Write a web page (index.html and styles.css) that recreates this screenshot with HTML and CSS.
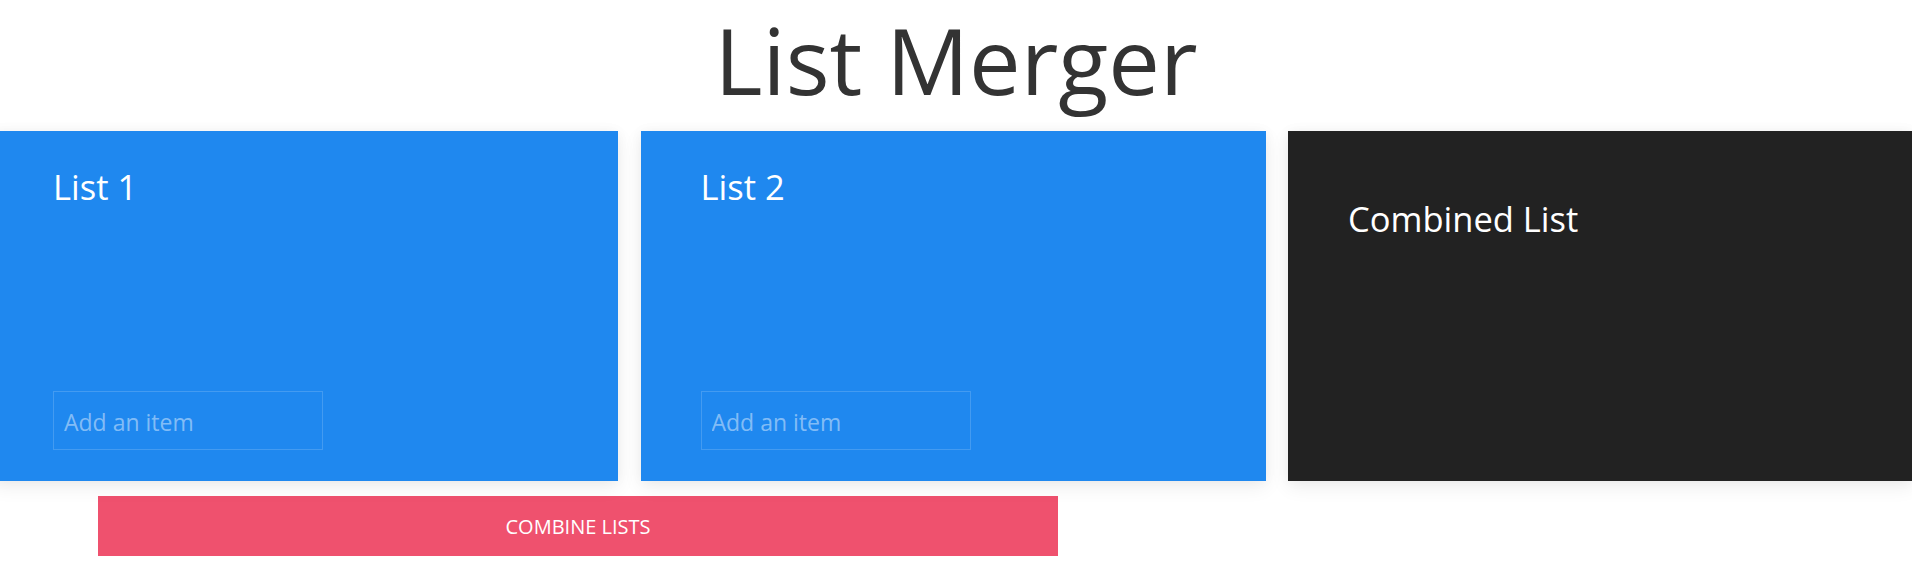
FILE: index.html
```html
<!DOCTYPE html>
<html lang="en">
<head>
<meta charset="utf-8">
<title>List Merger</title>
<link rel="stylesheet" href="styles.css">
</head>
<body>
<h1 class="title">List Merger</h1>
<div class="lists">
  <section class="card card-blue">
    <h2 class="card-title">List 1</h2>
    <input class="item-input" type="text" placeholder="Add an item">
  </section>
  <section class="card card-blue">
    <h2 class="card-title">List 2</h2>
    <input class="item-input" type="text" placeholder="Add an item">
  </section>
  <section class="card card-dark">
    <h2 class="card-title">Combined List</h2>
  </section>
</div>
<button class="combine-btn" type="button">Combine Lists</button>
</body>
</html>
```

FILE: styles.css
```css
html, body {
  margin: 0;
  padding: 0;
  background: #ffffff;
  overflow: hidden;
}

body {
  font-family: "Segoe UI", "Open Sans", "Noto Sans", sans-serif;
  color: #333333;
}

.title {
  margin: -3px 0 9px 0;
  text-align: center;
  font-size: 92px;
  font-weight: 400;
  line-height: 125px;
  color: #333333;
}

.lists {
  display: flex;
  gap: 22.5px;
  margin-left: -7px;
}

.card {
  flex: 0 0 625px;
  height: 350px;
  box-sizing: border-box;
  padding: 35px 60px 31px 60px;
  display: flex;
  flex-direction: column;
  align-items: flex-start;
  box-shadow: 0 6px 18px rgba(0, 0, 0, 0.07), 0 0 12px rgba(0, 0, 0, 0.04);
}

.card-blue {
  background: #1f88ef;
}

.card-dark {
  background: #222222;
  padding-top: 67px;
}

.card-title {
  margin: 0;
  font-size: 34.5px;
  font-weight: 400;
  line-height: 1.2;
  color: #ffffff;
}

.item-input {
  margin-top: auto;
  width: 270px;
  height: 59px;
  box-sizing: border-box;
  padding: 3px 10px 0 10px;
  border: 1px solid rgba(255, 255, 255, 0.16);
  background: transparent;
  font-family: inherit;
  font-size: 23px;
  color: #ffffff;
  outline: none;
}

.item-input::placeholder {
  color: rgba(255, 255, 255, 0.45);
}

.combine-btn {
  display: block;
  margin: 15px 0 0 98px;
  width: 960px;
  height: 60px;
  border: none;
  background: #ef516e;
  color: #ffffff;
  font-family: inherit;
  font-size: 20px;
  text-transform: uppercase;
  padding: 0;
}
```
